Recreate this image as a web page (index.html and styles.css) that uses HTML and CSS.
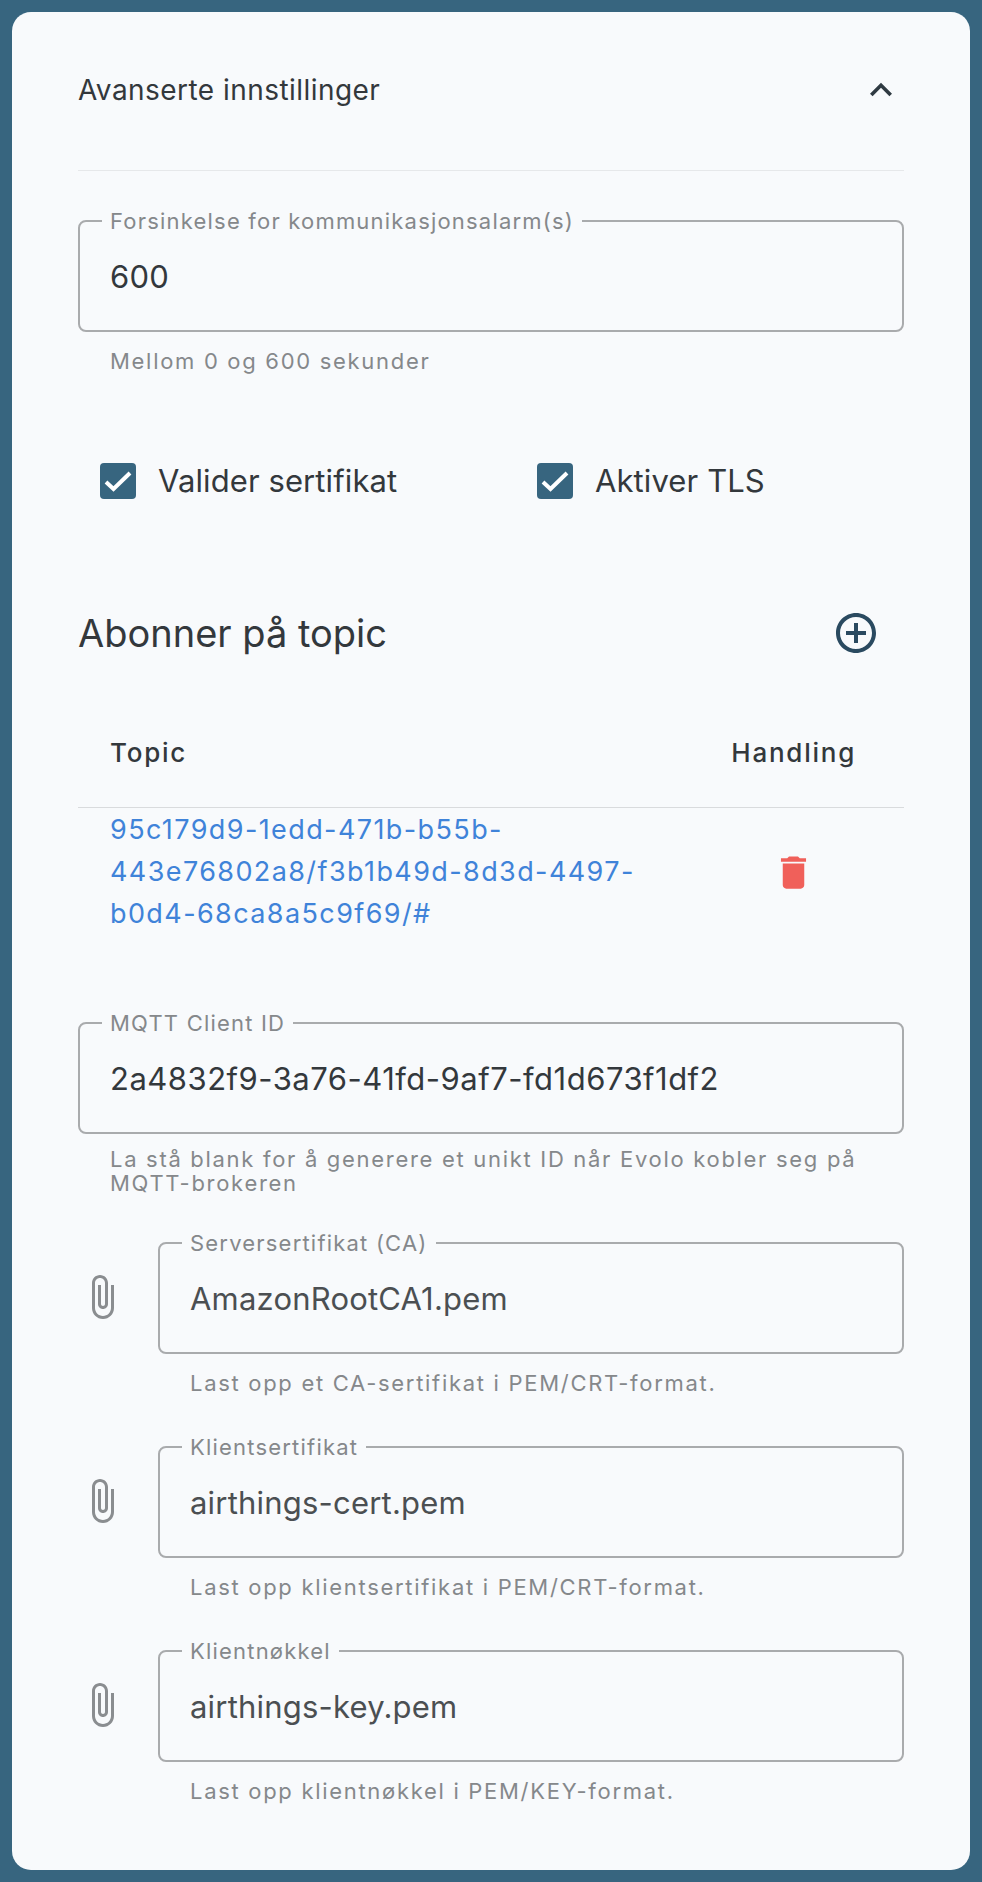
FILE: index.html
```html
<!DOCTYPE html>
<html lang="en">
<head>
  <meta charset="UTF-8">
  <title>Avanserte innstillinger</title>
  <link rel="stylesheet" href="styles.css">
</head>
<body>

  <div class="card">
    <div class="section-head">
      <span>Avanserte innstillinger</span>
      <svg class="chevron" viewBox="0 0 24 24"><path d="M12 8l-6 6 1.41 1.41L12 10.83l4.59 4.58L18 14z" fill="#2f3a42"/></svg>
    </div>

    <fieldset class="field first-field">
      <legend>Forsinkelse for kommunikasjonsalarm(s)</legend>
      <div class="value">600</div>
    </fieldset>
    <p class="helper">Mellom 0 og 600 sekunder</p>

    <div class="checks">
      <label class="check">
        <span class="box"><svg viewBox="0 0 36 36"><path d="M6 19l7.500 7L30 10" fill="none" stroke="#fff" stroke-width="4"/></svg></span>
        Valider sertifikat
      </label>
      <label class="check">
        <span class="box"><svg viewBox="0 0 36 36"><path d="M6 19l7.500 7L30 10" fill="none" stroke="#fff" stroke-width="4"/></svg></span>
        Aktiver TLS
      </label>
    </div>

    <div class="topic-head">
      <h2>Abonner på topic</h2>
      <svg class="add" viewBox="0 0 24 24"><path d="M13 7h-2v4H7v2h4v4h2v-4h4v-2h-4V7zm-1-5C6.480 2 2 6.480 2 12s4.480 10 10 10 10-4.480 10-10S17.520 2 12 2zm0 18c-4.410 0-8-3.590-8-8s3.590-8 8-8 8 3.590 8 8-3.590 8-8 8z" fill="#2a4a60"/></svg>
    </div>

    <div class="table-head">
      <span>Topic</span>
      <span>Handling</span>
    </div>
    <div class="table-row">
      <a class="topic-link">95c179d9-1edd-471b-b55b-<br>443e76802a8/f3b1b49d-8d3d-4497-<br>b0d4-68ca8a5c9f69/#</a>
      <svg class="trash" viewBox="0 0 24 24"><path d="M6 19c0 1.100.9 2 2 2h8c1.100 0 2-.9 2-2V7H6v12zM19 4h-3.500l-1-1h-5l-1 1H5v2h14V4z" fill="#f0605a"/></svg>
    </div>

    <fieldset class="field client-field">
      <legend>MQTT Client ID</legend>
      <div class="value">2a4832f9-3a76-41fd-9af7-fd1d673f1df2</div>
    </fieldset>
    <p class="helper helper-long">La stå blank for å generere et unikt ID når Evolo kobler seg på MQTT-brokeren</p>

    <div class="file-row first-file">
      <svg class="clip" viewBox="0 0 24 24"><path d="M16.500 6v11.500c0 2.210-1.790 4-4 4s-4-1.790-4-4V5c0-1.380 1.120-2.500 2.500-2.500s2.500 1.120 2.500 2.500v10.500c0 .55-.45 1-1 1s-1-.45-1-1V6H10v9.500c0 1.380 1.120 2.500 2.500 2.500s2.500-1.120 2.500-2.500V5c0-2.210-1.790-4-4-4S7 2.790 7 5v12.500c0 3.040 2.460 5.500 5.500 5.500s5.500-2.460 5.500-5.500V6h-1.500z" fill="#8a8d90"/></svg>
      <div class="file-field">
        <fieldset class="field">
          <legend>Serversertifikat (CA)</legend>
          <div class="value muted">AmazonRootCA1.pem</div>
        </fieldset>
        <p class="helper">Last opp et CA-sertifikat i PEM/CRT-format.</p>
      </div>
    </div>

    <div class="file-row">
      <svg class="clip" viewBox="0 0 24 24"><path d="M16.500 6v11.500c0 2.210-1.790 4-4 4s-4-1.790-4-4V5c0-1.380 1.120-2.500 2.500-2.500s2.500 1.120 2.500 2.500v10.500c0 .55-.45 1-1 1s-1-.45-1-1V6H10v9.500c0 1.380 1.120 2.500 2.500 2.500s2.500-1.120 2.500-2.500V5c0-2.210-1.790-4-4-4S7 2.790 7 5v12.500c0 3.040 2.460 5.500 5.500 5.500s5.500-2.460 5.500-5.500V6h-1.500z" fill="#8a8d90"/></svg>
      <div class="file-field">
        <fieldset class="field">
          <legend>Klientsertifikat</legend>
          <div class="value muted">airthings-cert.pem</div>
        </fieldset>
        <p class="helper">Last opp klientsertifikat i PEM/CRT-format.</p>
      </div>
    </div>

    <div class="file-row">
      <svg class="clip" viewBox="0 0 24 24"><path d="M16.500 6v11.500c0 2.210-1.790 4-4 4s-4-1.790-4-4V5c0-1.380 1.120-2.500 2.500-2.500s2.500 1.120 2.500 2.500v10.500c0 .55-.45 1-1 1s-1-.45-1-1V6H10v9.500c0 1.380 1.120 2.500 2.500 2.500s2.500-1.120 2.500-2.500V5c0-2.210-1.790-4-4-4S7 2.790 7 5v12.500c0 3.040 2.460 5.500 5.500 5.500s5.500-2.460 5.500-5.500V6h-1.500z" fill="#8a8d90"/></svg>
      <div class="file-field">
        <fieldset class="field">
          <legend>Klientnøkkel</legend>
          <div class="value muted">airthings-key.pem</div>
        </fieldset>
        <p class="helper">Last opp klientnøkkel i PEM/KEY-format.</p>
      </div>
    </div>
  </div>

</body>
</html>
```

FILE: styles.css
```css
body {
  margin: 0;
  padding: 12px;
  background-color: #37657f;
  font-family: Inter, "Liberation Sans", sans-serif;
  color: #33383c;
}
.card {
  height: 1858px;
  box-sizing: border-box;
  padding: 0 66px;
  background-color: #f8fafc;
  border-radius: 19px;
}
.section-head {
  display: flex;
  justify-content: space-between;
  align-items: center;
  height: 159px;
  padding-bottom: 3px;
  box-sizing: border-box;
  border-bottom: 1px solid #e6e8ea;
  font-size: 28px;
  letter-spacing: 0.45px;
}
.chevron {
  width: 44px;
  height: 44px;
  margin-right: 1px;
}
.field {
  margin: 0;
  padding: 0 30px;
  height: 123px;
  box-sizing: border-box;
  border: 2px solid #a9abad;
  border-radius: 8px;
  min-width: 0;
}
.field legend {
  padding: 0 8px;
  margin-left: -8px;
  font-size: 22px;
  line-height: 24px;
  color: #85888b;
  letter-spacing: 1.2px;
}
.value {
  font-size: 31px;
  line-height: 34px;
  margin-top: 27px;
  letter-spacing: 0.2px;
}
.muted {
  color: #4b4f52;
}
.first-field {
  margin-top: 38px;
}
.helper {
  margin: 17px 0 0;
  padding: 0 32px;
  font-size: 22px;
  line-height: 24px;
  color: #85888b;
  letter-spacing: 1.7px;
}
.helper-long {
  margin-top: 13px;
}
.checks {
  display: grid;
  grid-template-columns: 437px 1fr;
  margin-top: 90px;
  padding-left: 22px;
}
.check {
  display: flex;
  align-items: center;
  gap: 22px;
  font-size: 31px;
  line-height: 36px;
  letter-spacing: 0.1px;
}
.box {
  width: 36px;
  height: 36px;
  background-color: #37657f;
  border-radius: 4px;
}
.box svg {
  display: block;
}
.topic-head {
  display: flex;
  justify-content: space-between;
  align-items: center;
  margin-top: 102px;
  padding-right: 24px;
}
.topic-head h2 {
  margin: 0;
  font-size: 38px;
  font-weight: 400;
  line-height: 64px;
}
.add {
  width: 48px;
  height: 48px;
}
.table-head {
  display: flex;
  justify-content: space-between;
  align-items: center;
  height: 111px;
  box-sizing: border-box;
  padding: 0 48px 0 32px;
  margin-top: 32px;
  border-bottom: 1px solid #d9dbdd;
  font-size: 26px;
  font-weight: 500;
  letter-spacing: 1.75px;
}
.table-row {
  display: flex;
  justify-content: space-between;
  align-items: center;
  padding: 1px 89px 0 32px;
}
.topic-link {
  font-size: 27px;
  line-height: 42px;
  color: #3f83d9;
  letter-spacing: 1.4px;
}
.trash {
  width: 43px;
  height: 43px;
}
.client-field {
  margin-top: 76px;
}
.client-field .value {
  letter-spacing: 0.5px;
}
.file-row {
  display: flex;
  margin-top: 40px;
}
.first-file {
  margin-top: 36px;
}
.clip {
  flex: none;
  width: 48px;
  height: 48px;
  margin-top: 42px;
}
.file-field {
  flex: 1;
  margin-left: 32px;
}
```
